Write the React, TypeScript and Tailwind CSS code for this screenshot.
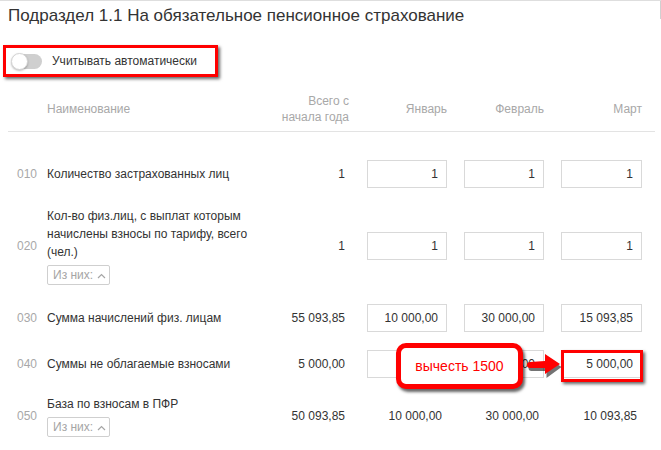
import React from 'react'

interface Row {
  code: string
  name: string[]
  total: string
  months: string[]
  editable: boolean
  sub?: boolean
}

const ROWS: Row[] = [
  { code: '010', name: ['Количество застрахованных лиц'], total: '1', months: ['1', '1', '1'], editable: true },
  {
    code: '020',
    name: ['Кол-во физ.лиц, с выплат которым начислены взносы по тарифу, всего (чел.)'],
    total: '1',
    months: ['1', '1', '1'],
    editable: true,
    sub: true
  },
  { code: '030', name: ['Сумма начислений физ. лицам'], total: '55 093,85', months: ['10 000,00', '30 000,00', '15 093,85'], editable: true },
  { code: '040', name: ['Суммы не облагаемые взносами'], total: '5 000,00', months: ['0,00', '0,00', '5 000,00'], editable: true },
  { code: '050', name: ['База по взносам в ПФР'], total: '50 093,85', months: ['10 000,00', '30 000,00', '10 093,85'], editable: false, sub: true }
]

const ROW_PAD: Record<string, string> = {
  '010': 'py-[9px]',
  '020': 'py-[10px]',
  '030': 'py-[9px]',
  '040': 'py-[9px]',
  '050': 'pt-[8px] pb-[10px]'
}

const MONTH_COLS = ['ml-[20px] w-[80px]', 'ml-[17px] w-[80px]', 'ml-[17px] w-[81px]']

function SubButton(): React.JSX.Element {
  return (
    <button className="mt-[4px] flex h-[20px] w-[63px] items-center gap-[4px] rounded-[2px] border border-[#cfcfcf] pl-[5px] text-[12px] text-[#a5a5a5]">
      <span>Из них:</span>
      <svg width="9" height="6" viewBox="0 0 9 6" className="mt-[1px]">
        <path d="M1 5 L4.5 1.5 L8 5" fill="none" stroke="#a5a5a5" strokeWidth="1.2" />
      </svg>
    </button>
  )
}

function Cell({ value, editable, mark }: { value: string; editable: boolean; mark?: boolean }): React.JSX.Element {
  if (!editable) {
    return <div className="pr-[5px] text-right text-[12px] text-[#333]">{value}</div>
  }
  return (
    <div className="relative">
      <div className="flex h-[28px] items-center justify-end border border-[#d9d9d9] bg-white pr-[8px] text-[12px] text-[#333]">
        {value}
      </div>
      {mark && (
        <div className="absolute left-0 top-0 h-[32px] w-[82px] border-[3px] border-[#ff0000] shadow-[2px_2px_3px_rgba(0,0,0,0.6)]" />
      )}
    </div>
  )
}

export default function App(): React.JSX.Element {
  return (
    <div
      className="relative h-[450px] w-[661px] overflow-hidden border-t border-[#dedede] bg-white pt-[5px] text-[#333]"
      style={{ fontFamily: '"Liberation Sans", Arial, sans-serif' }}
    >
      {/* скроллбар справа */}
      <div className="absolute right-0 top-0 h-[18px] w-[1px] bg-[#d0d0d0]" />

      <div className="pl-[8px] text-[17px] leading-[20px] text-[#333]">
        Подраздел 1.1 На обязательное пенсионное страхование
      </div>

      {/* Учитывать автоматически */}
      <div className="ml-[3px] mt-[19px] flex h-[32px] w-[215px] items-center border-[3px] border-[#ff0000] shadow-[2px_2px_3px_rgba(0,0,0,0.6)]">
        <div className="relative ml-[6px] h-[15px] w-[30px] rounded-full bg-[#cfcfcf]">
          <div className="absolute -left-[1px] -top-[1px] h-[17px] w-[17px] rounded-full border border-[#d4d4d4] bg-white shadow-[0_1px_2px_rgba(0,0,0,0.25)]" />
        </div>
        <span className="ml-[10px] text-[12px] text-[#333]">Учитывать автоматически</span>
      </div>

      {/* Шапка */}
      <div className="ml-[8px] mt-[9px] flex h-[46px] w-[647px] items-center border-b border-[#e3e3e3] text-[12px] text-[#a8a8a8]">
        <div className="w-[39px]" />
        <div className="w-[216px]">Наименование</div>
        <div className="w-[86px] text-right leading-[16px]">
          Всего с
          <br />
          начала года
        </div>
        <div className="ml-[18px] w-[80px] text-right">Январь</div>
        <div className="ml-[17px] w-[80px] text-right">Февраль</div>
        <div className="ml-[17px] w-[81px] text-right">Март</div>
      </div>

      <div className="ml-[8px] mt-[19px]">
        {ROWS.map((row) => (
          <div key={row.code} className={`flex items-center ${ROW_PAD[row.code]}`}>
            <div className="w-[39px] pl-[9px] text-[12px] text-[#a8a8a8]">{row.code}</div>
            <div className="w-[216px] text-[12px] leading-[18px] text-[#333]">
              <div className="w-[210px]">{row.name.join(' ')}</div>
              {row.sub && <SubButton />}
            </div>
            <div className="w-[84px] pr-[2px] text-right text-[12px] text-[#333]">{row.total}</div>
            {row.months.map((m, i) => (
              <div key={i} className={MONTH_COLS[i]}>
                <Cell value={m} editable={row.editable} mark={row.code === '040' && i === 2} />
              </div>
            ))}
          </div>
        ))}
      </div>

      {/* выноска */}
      <div className="absolute left-[396px] top-[342px] flex h-[46px] w-[127px] items-center justify-center rounded-[10px] border-[5px] border-[#ff0000] bg-white text-[14px] text-[#ff0000] shadow-[2px_3px_3px_rgba(0,0,0,0.6)]">
        вычесть 1500
      </div>
      <svg className="absolute left-[524px] top-[351px]" width="40" height="28" viewBox="0 0 40 28">
        <path d="M6 11 L21 10 L21 3 L36 13 L21 24 L21 17 L6 17 A3 3 0 0 1 6 11 Z" fill="#000" opacity="0.55" transform="translate(1.5 2)" />
        <path d="M6 10 L21 9 L21 2 L36 12 L21 22 L21 16 L6 16 A3 3 0 0 1 6 10 Z" fill="#ff0000" />
      </svg>
    </div>
  )
}
